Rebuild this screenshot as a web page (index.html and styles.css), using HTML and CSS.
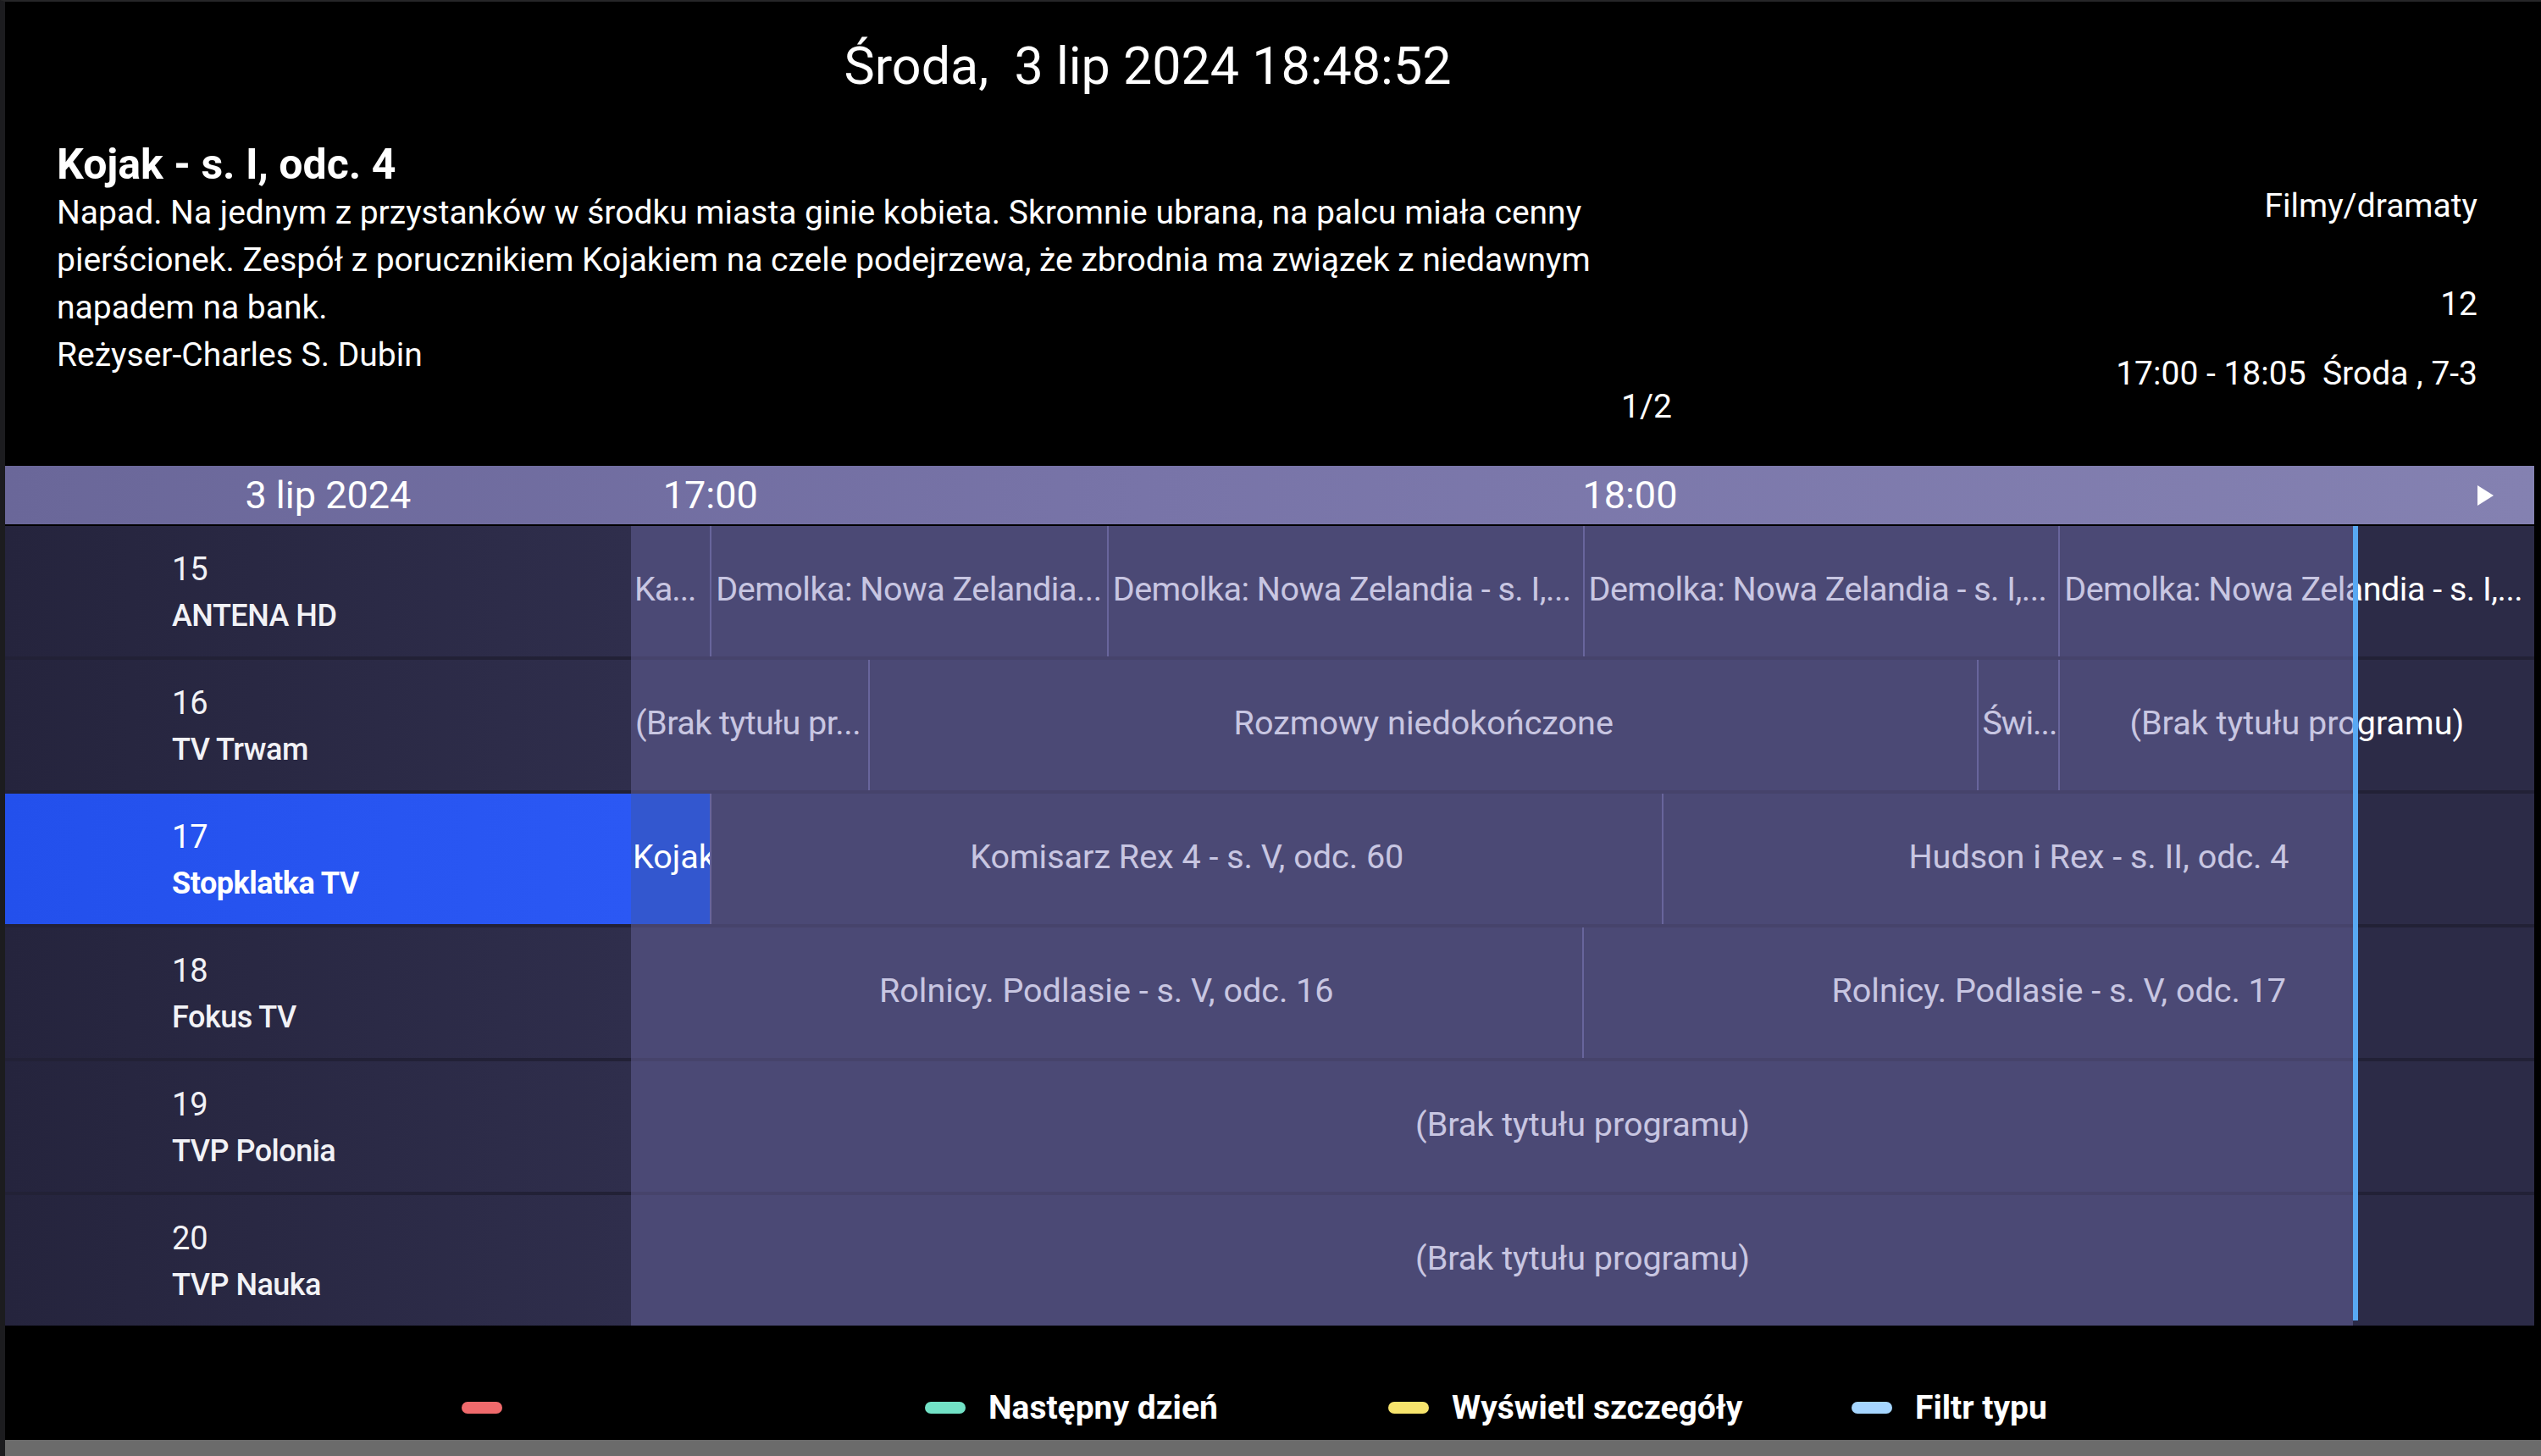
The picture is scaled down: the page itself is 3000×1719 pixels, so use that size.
FILE: index.html
```html
<!DOCTYPE html>
<html lang="pl">
<head>
    <meta charset="UTF-8">
    <meta name="viewport" content="width=device-width, initial-scale=1.0">
    <title>Przewodnik po programach</title>
    <link rel="stylesheet" href="styles.css">
</head>
<body>
    <div class="screen">
        <div class="clock">Środa,&nbsp; 3 lip 2024 18:48:52</div>

        <div class="info">
            <div class="info-main">
                <div class="prog-title">Kojak - s. I, odc. 4</div>
                <p class="prog-desc">Napad. Na jednym z przystanków w środku miasta ginie kobieta. Skromnie ubrana, na palcu miała cenny<br>pierścionek. Zespół z porucznikiem Kojakiem na czele podejrzewa, że zbrodnia ma związek z niedawnym<br>napadem na bank.</p>
                <p class="prog-desc">Reżyser-Charles S. Dubin</p>
                <div class="page-num">1/2</div>
            </div>
            <div class="info-meta">
                <div class="genre">Filmy/dramaty</div>
                <div class="age">12</div>
                <div class="when">17:00 - 18:05&nbsp; Środa , 7-3</div>
            </div>
        </div>

        <div class="guide">
            <div class="timebar">
                <div class="day">3 lip 2024</div>
                <div class="hour first">17:00</div>
                <div class="hour">
                    18:00
                    <svg class="arrow" width="22" height="26" viewBox="0 0 22 26"><path d="M2 1 L21 13 L2 25 Z" fill="#fff"/></svg>
                </div>
            </div>

            <div class="rows">
                <div class="row">
                    <div class="chan"><span class="num">15</span><span class="name">ANTENA HD</span></div>
                    <div class="progs">
                        <div class="cell left tiny" style="flex-grow:5"><span>Ka...</span></div>
                        <div class="cell left" style="flex-grow:25"><span>Demolka: Nowa Zelandia...</span></div>
                        <div class="cell left" style="flex-grow:30"><span>Demolka: Nowa Zelandia - s. I,...</span></div>
                        <div class="cell left" style="flex-grow:30"><span>Demolka: Nowa Zelandia - s. I,...</span></div>
                        <div class="cell left" style="flex-grow:30"><span>Demolka: Nowa Zelandia - s. I,...</span></div>
                    </div>
                </div>
                <div class="row">
                    <div class="chan"><span class="num">16</span><span class="name">TV Trwam</span></div>
                    <div class="progs">
                        <div class="cell left" style="flex-grow:15"><span>(Brak tytułu pr...</span></div>
                        <div class="cell" style="flex-grow:70"><span>Rozmowy niedokończone</span></div>
                        <div class="cell left tiny" style="flex-grow:5"><span>Świ...</span></div>
                        <div class="cell" style="flex-grow:30"><span>(Brak tytułu programu)</span></div>
                    </div>
                </div>
                <div class="row selected">
                    <div class="chan"><span class="num">17</span><span class="name">Stopklatka TV</span></div>
                    <div class="progs">
                        <div class="cell on" style="flex-grow:5"><span>Kojak - s. I, odc. 4</span></div>
                        <div class="cell" style="flex-grow:60"><span>Komisarz Rex 4 - s. V, odc. 60</span></div>
                        <div class="cell" style="flex-grow:55"><span>Hudson i Rex - s. II, odc. 4</span></div>
                    </div>
                </div>
                <div class="row">
                    <div class="chan"><span class="num">18</span><span class="name">Fokus TV</span></div>
                    <div class="progs">
                        <div class="cell" style="flex-grow:60"><span>Rolnicy. Podlasie - s. V, odc. 16</span></div>
                        <div class="cell" style="flex-grow:60"><span>Rolnicy. Podlasie - s. V, odc. 17</span></div>
                    </div>
                </div>
                <div class="row">
                    <div class="chan"><span class="num">19</span><span class="name">TVP Polonia</span></div>
                    <div class="progs">
                        <div class="cell" style="flex-grow:120"><span>(Brak tytułu programu)</span></div>
                    </div>
                </div>
                <div class="row">
                    <div class="chan"><span class="num">20</span><span class="name">TVP Nauka</span></div>
                    <div class="progs">
                        <div class="cell" style="flex-grow:120"><span>(Brak tytułu programu)</span></div>
                    </div>
                </div>

                <!-- część, która już minęła, i linia bieżącego czasu (18:48:52) -->
                <div class="past"></div>
                <div class="now-line"></div>
            </div>
        </div>

        <div class="legend">
            <div class="key"><span class="pill red"></span></div>
            <div class="key"><span class="pill green"></span>Następny dzień</div>
            <div class="key"><span class="pill yellow"></span>Wyświetl szczegóły</div>
            <div class="key"><span class="pill blue"></span>Filtr typu</div>
        </div>

        <div class="bezel"></div>
    </div>
</body>
</html>
```

FILE: styles.css
```css
body {
    margin: 0;
    background-color: #000;
    color: #fff;
    font-family: Roboto, "Noto Sans", Arial, sans-serif;
}

.screen {
    width: 3000px;
    height: 1719px;
    box-sizing: border-box;
    border-left: 6px solid #1c1c1f;
    border-top: 2px solid #262628;
    overflow: hidden;
    display: flex;
    flex-direction: column;
}

.clock {
    margin-top: 36px;
    height: 80px;
    line-height: 80px;
    font-size: 61px;
    text-align: center;
    padding-right: 296px;
}

/* opis wybranego programu */
.info {
    display: flex;
    margin-top: 47px;
    padding: 0 75px 0 61px;
}

.info-main {
    width: 1907px;
}

.prog-title {
    font-size: 50px;
    font-weight: 700;
    line-height: 58px;
}

.prog-desc {
    margin: 0;
    font-size: 39px;
    line-height: 56px;
}

.page-num {
    margin-top: 6px;
    font-size: 39px;
    line-height: 54px;
    text-align: right;
}

.info-meta {
    margin-left: auto;
    padding-top: 51px;
    text-align: right;
    font-size: 39px;
    line-height: 54px;
}

.age {
    margin-top: 62px;
}

.when {
    margin-top: 28px;
}

/* siatka EPG */
.guide {
    margin-top: 43px;
    width: 2986px;
}

.timebar {
    display: flex;
    height: 69px;
    line-height: 69px;
    font-size: 45px;
    background: linear-gradient(90deg, #6a6799 0%, #7874a8 45%, #8481b1 100%);
}

.day {
    width: 739px;
    box-sizing: border-box;
    padding-left: 24px;
    text-align: center;
}

.hour {
    width: 1124px;
    box-sizing: border-box;
    display: flex;
    align-items: center;
}

.hour.first {
    padding-left: 38px;
}

.arrow {
    margin-left: auto;
    margin-right: 47px;
}

.rows {
    position: relative;
    margin-top: 2px;
    display: flex;
    flex-direction: column;
    gap: 4px;
    background-color: #222136;
}

.row {
    display: flex;
    height: 154px;
}

.chan {
    flex-shrink: 0;
    width: 739px;
    box-sizing: border-box;
    padding: 24px 0 0 197px;
    background: linear-gradient(90deg, #25243d 0%, #2f2e4c 100%);
    font-size: 38px;
    line-height: 55px;
    color: #f2f2f6;
}

.chan .num {
    display: block;
}

.chan .name {
    display: block;
    font-size: 36px;
    font-weight: 500;
    letter-spacing: -0.5px;
}

.row.selected .chan {
    background: linear-gradient(90deg, #2350ec 0%, #2b58f4 100%);
    color: #fff;
}

.row.selected .chan .name {
    font-weight: 700;
}

.progs {
    flex: 1;
    min-width: 0;
    display: flex;
    background-color: #2c2b47;
}

.cell {
    flex-basis: 0;
    min-width: 0;
    overflow: hidden;
    display: flex;
    align-items: center;
    justify-content: center;
    border-left: 2px solid #5d5b88;
    font-size: 39.5px;
    color: #fff;
    padding-bottom: 6px;
}

.cell:first-child {
    border-left: none;
}

.cell span {
    margin: 0 6px;
    overflow: hidden;
    white-space: nowrap;
    text-overflow: ellipsis;
}

.cell.left {
    justify-content: flex-start;
}

.cell.left span {
    margin: 0 2px 0 5px;
    letter-spacing: -0.5px;
}

.cell.tiny span {
    margin: 0 1px 0 4px;
    letter-spacing: -1px;
    text-overflow: clip;
}

.cell.on {
    position: relative;
    z-index: 2;
    justify-content: flex-start;
    background-color: #3357cf;
}

.cell.on span {
    margin: 0 0 0 2px;
    text-overflow: clip;
}

.past {
    position: absolute;
    top: 0;
    bottom: 0;
    left: 739px;
    width: 2033px;
    background-color: rgba(122, 116, 185, 0.41);
    z-index: 1;
}

.now-line {
    position: absolute;
    top: 0;
    bottom: 6px;
    left: 2772px;
    width: 6px;
    background-color: #58a9f3;
    z-index: 3;
}

/* klawisze kolorowe */
.legend {
    height: 134px;
    box-sizing: border-box;
    padding: 60px 0 0 539px;
    display: flex;
    align-items: center;
    font-size: 39px;
    font-weight: 700;
}

.key {
    width: 547px;
    display: flex;
    align-items: center;
    gap: 27px;
}

.pill {
    width: 48px;
    height: 14px;
    border-radius: 7px;
}

.pill.red { background-color: #f06a6c; }
.pill.green { background-color: #72e2c6; }
.pill.yellow { background-color: #f7e46c; }
.pill.blue { background-color: #a6d6ff; }

.bezel {
    margin-top: auto;
    margin-left: -6px;
    height: 19px;
    background-color: #6b6b6b;
}
```
